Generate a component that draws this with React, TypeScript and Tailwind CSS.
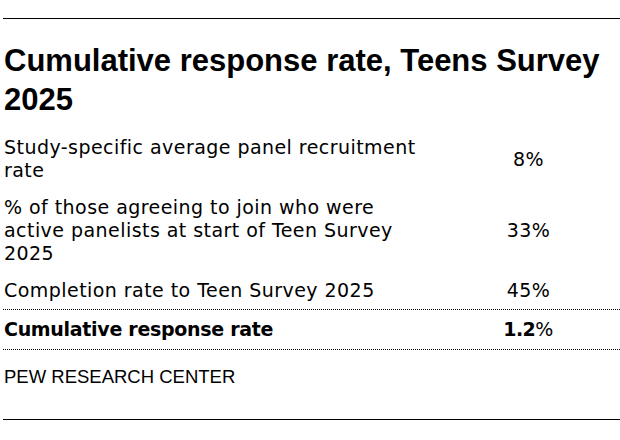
import React from 'react';

interface Row {
  label: string;
  value: string;
}

const rows: Row[] = [
  { label: 'Study-specific average panel recruitment rate', value: '8%' },
  { label: '% of those agreeing to join who were active panelists at start of Teen Survey 2025', value: '33%' },
  { label: 'Completion rate to Teen Survey 2025', value: '45%' },
];

const App: React.FC = () => {
  return (
    <div className="w-[620px] h-[440px] bg-white overflow-hidden pt-[18px]">
      <div className="ml-[3px] w-[617px] border-t border-black text-black">
        <h1 className="mt-[22px] pl-[1px] font-['Liberation_Sans',Arial,sans-serif] text-[31px] leading-[39px] font-bold">
          Cumulative response rate, Teens Survey 2025
        </h1>

        <div className="mt-[10px] font-['DejaVu_Sans',sans-serif] text-[19px] leading-[23px] tracking-[0.45px]">
          {rows.map((r, i) => (
            <div
              key={i}
              className={`grid grid-cols-[427px_1fr] py-[7px] ${i === rows.length - 1 ? 'border-b border-dotted border-black' : ''}`}
            >
              <div className="pl-[1px]">{r.label}</div>
              <div className="pl-[7px] text-center self-center">{r.value}</div>
            </div>
          ))}
          <div className="grid grid-cols-[427px_1fr] py-[8px] border-b border-dotted border-black">
            <div className="pl-[1px] font-bold tracking-[-0.3px]">Cumulative response rate</div>
            <div className="pl-[7px] text-center self-center">
              <span className="font-bold tracking-[-0.5px]">1.2</span>%
            </div>
          </div>
        </div>

        <div className="mt-[16px] pl-[1px] font-['Liberation_Sans',Arial,sans-serif] text-[18.5px] leading-[21px]">
          PEW RESEARCH CENTER
        </div>

        <div className="mt-[32px] border-t border-black" />
      </div>
    </div>
  );
};

export default App;
